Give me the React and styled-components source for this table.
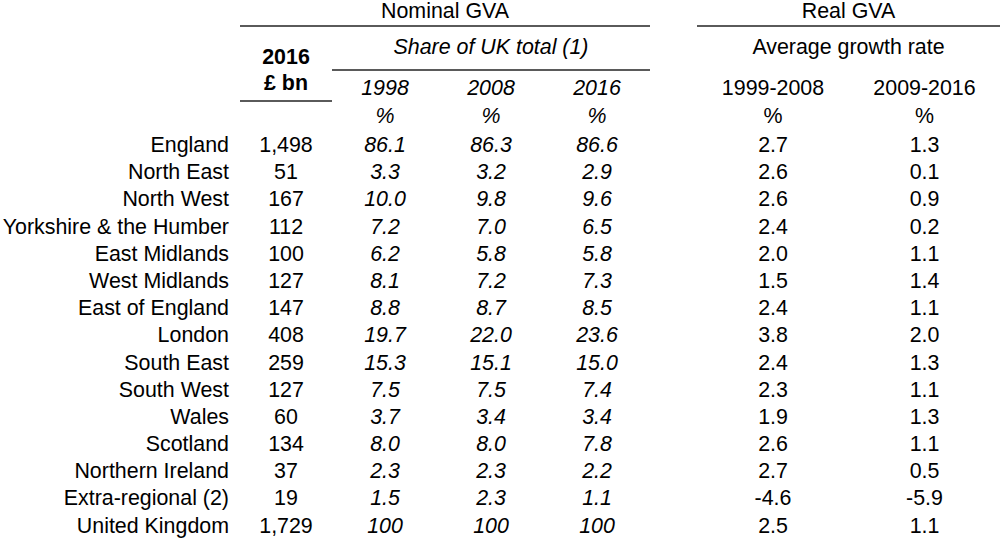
import React from "react";
import styled, { createGlobalStyle } from "styled-components";

const GlobalStyle = createGlobalStyle`
  html, body {
    margin: 0;
    padding: 0;
    background: #ffffff;
  }
  body {
    font-family: "Liberation Sans", Arial, sans-serif;
    color: #000000;
  }
`;

const Table = styled.div`
  display: grid;
  grid-template-columns: 240px 92px 106px 106px 106px 47px 152px 151px;
  grid-template-rows: 27px 44px 31px 30px repeat(15, 27.2px);
  width: 1000px;
  height: 538px;
  font-size: 21.4px;
  overflow: hidden;
`;

const GroupHead = styled.div`
  grid-column: ${(p) => p.$cols};
  grid-row: 1;
  box-sizing: border-box;
  border-bottom: 2px solid #5a5a5a;
  line-height: 22px;
  text-align: center;
`;

const SubHead = styled.div`
  grid-column: ${(p) => p.$cols};
  grid-row: 2;
  box-sizing: border-box;
  padding-top: 9px;
  line-height: 22px;
  text-align: center;
  font-style: ${(p) => (p.$italic ? "italic" : "normal")};
  border-bottom: ${(p) => (p.$ruled ? "2px solid #5a5a5a" : "none")};
`;

const UnitHead = styled.div`
  grid-column: 2;
  grid-row: 2 / 4;
  box-sizing: border-box;
  padding-top: 17px;
  line-height: 26px;
  font-weight: bold;
  text-align: center;
  border-bottom: 2px solid #5a5a5a;
`;

const YearHead = styled.div`
  grid-column: ${(p) => p.$col};
  grid-row: 3;
  padding-top: 6px;
  line-height: 22px;
  text-align: center;
  font-style: ${(p) => (p.$italic ? "italic" : "normal")};
`;

const PctHead = styled.div`
  grid-column: ${(p) => p.$col};
  grid-row: 4;
  line-height: 29px;
  text-align: center;
  font-style: ${(p) => (p.$italic ? "italic" : "normal")};
`;

const Label = styled.div`
  grid-column: 1;
  padding-right: 11px;
  line-height: 27.2px;
  text-align: right;
  white-space: nowrap;
`;

const Value = styled.div`
  grid-column: ${(p) => p.$col};
  line-height: 27.2px;
  text-align: center;
  font-style: ${(p) => (p.$italic ? "italic" : "normal")};
`;

const rows = [
  ["England", "1,498", "86.1", "86.3", "86.6", "2.7", "1.3"],
  ["North East", "51", "3.3", "3.2", "2.9", "2.6", "0.1"],
  ["North West", "167", "10.0", "9.8", "9.6", "2.6", "0.9"],
  ["Yorkshire & the Humber", "112", "7.2", "7.0", "6.5", "2.4", "0.2"],
  ["East Midlands", "100", "6.2", "5.8", "5.8", "2.0", "1.1"],
  ["West Midlands", "127", "8.1", "7.2", "7.3", "1.5", "1.4"],
  ["East of England", "147", "8.8", "8.7", "8.5", "2.4", "1.1"],
  ["London", "408", "19.7", "22.0", "23.6", "3.8", "2.0"],
  ["South East", "259", "15.3", "15.1", "15.0", "2.4", "1.3"],
  ["South West", "127", "7.5", "7.5", "7.4", "2.3", "1.1"],
  ["Wales", "60", "3.7", "3.4", "3.4", "1.9", "1.3"],
  ["Scotland", "134", "8.0", "8.0", "7.8", "2.6", "1.1"],
  ["Northern Ireland", "37", "2.3", "2.3", "2.2", "2.7", "0.5"],
  ["Extra-regional (2)", "19", "1.5", "2.3", "1.1", "-4.6", "-5.9"],
  ["United Kingdom", "1,729", "100", "100", "100", "2.5", "1.1"],
];

// grid column for each value after the label
const valueCols = [2, 3, 4, 5, 7, 8];
const italicCols = [3, 4, 5];

export default function App() {
  return (
    <>
      <GlobalStyle />
      <Table>
        <GroupHead $cols="2 / 6">Nominal GVA</GroupHead>
        <GroupHead $cols="7 / 9">Real GVA</GroupHead>

        <UnitHead>
          2016
          <br />£ bn
        </UnitHead>
        <SubHead $cols="3 / 6" $italic $ruled>
          Share of UK total (1)
        </SubHead>
        <SubHead $cols="7 / 9">Average growth rate</SubHead>

        <YearHead $col={3} $italic>1998</YearHead>
        <YearHead $col={4} $italic>2008</YearHead>
        <YearHead $col={5} $italic>2016</YearHead>
        <YearHead $col={7}>1999-2008</YearHead>
        <YearHead $col={8}>2009-2016</YearHead>

        <PctHead $col={3} $italic>%</PctHead>
        <PctHead $col={4} $italic>%</PctHead>
        <PctHead $col={5} $italic>%</PctHead>
        <PctHead $col={7}>%</PctHead>
        <PctHead $col={8}>%</PctHead>

        {rows.map(([name, ...vals], i) => (
          <React.Fragment key={name}>
            <Label style={{ gridRow: i + 5 }}>{name}</Label>
            {vals.map((v, j) => (
              <Value
                key={j}
                $col={valueCols[j]}
                $italic={italicCols.includes(valueCols[j])}
                style={{ gridRow: i + 5 }}
              >
                {v}
              </Value>
            ))}
          </React.Fragment>
        ))}
      </Table>
    </>
  );
}
